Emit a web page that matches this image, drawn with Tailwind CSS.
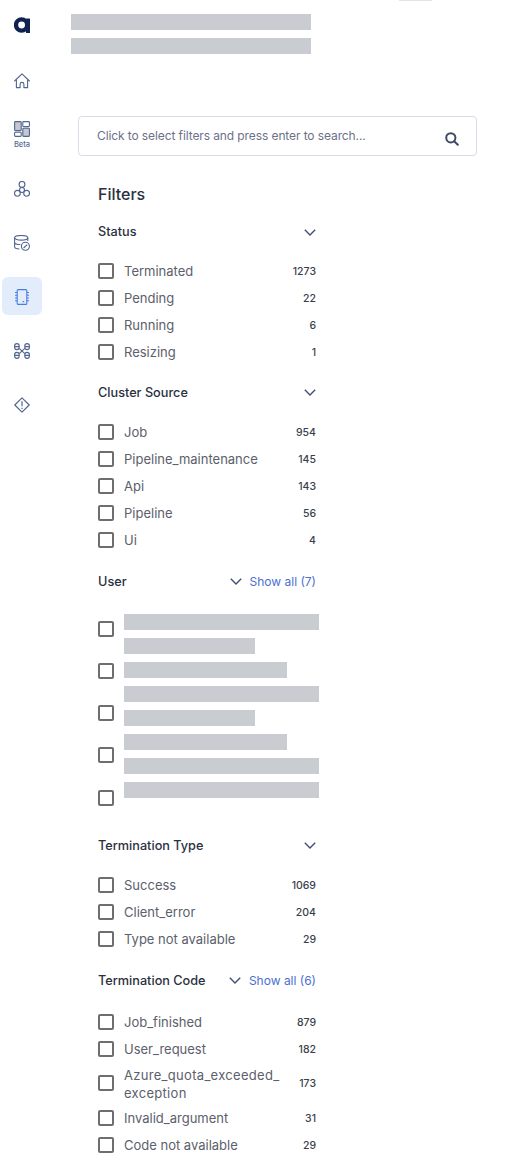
<!DOCTYPE html>
<html lang="en">
<head>
<meta charset="utf-8">
<title>Filters</title>
<script src="https://cdn.jsdelivr.net/npm/@tailwindcss/browser@4"></script>
</head>
<body class="bg-white">
<div class="relative flex w-[511px] h-[1168px] overflow-hidden bg-white font-['Inter','Noto_Sans',sans-serif]">
  <div class="absolute left-[399px] top-0 w-[33px] h-[1px] bg-[#e2e4e8]"></div>

  <!-- Sidebar -->
  <nav class="w-[44px] shrink-0 flex flex-col items-center">
    <svg class="mt-[17px] w-[16px] h-[16px]" viewBox="0 0 16 16"><circle cx="7.6" cy="8" r="5.6" fill="none" stroke="#0f2350" stroke-width="4.4"/><rect x="12" y="1.6" width="4" height="14.4" rx="0.5" fill="#0f2350"/></svg>
    <svg class="mt-[40px] w-[16px] h-[16px]" viewBox="0 0 16 16" fill="none" stroke="#52658f" stroke-width="1.1" stroke-linejoin="round" stroke-linecap="round"><path d="M0.6 8 8 0.8 15.4 8"/><path d="M2.4 7v7.6h3.7v-3.3a1.9 1.9 0 0 1 3.8 0v3.3h3.7V7"/></svg>
    <svg class="mt-[32px] w-[16px] h-[16px]" viewBox="0 0 16 16" fill="#c3c8d2" stroke="#52658f" stroke-width="1.1" stroke-linejoin="round"><rect x="0.6" y="0.6" width="6.6" height="9" rx="0.8"/><rect x="8.8" y="0.6" width="6.6" height="5" rx="0.8" fill="none"/><rect x="0.6" y="11.2" width="6.6" height="4.2" rx="0.8" fill="none"/><rect x="8.8" y="7.2" width="6.6" height="8.2" rx="0.8"/></svg>
    <span class="mt-[2px] h-[10px] text-[7.5px] leading-[12px] font-medium text-[#5a6c95]">Beta</span>
    <svg class="mt-[32px] w-[16px] h-[16px]" viewBox="0 0 16 16" fill="none" stroke="#52658f" stroke-width="1.1"><circle cx="8" cy="3.4" r="2.9"/><circle cx="3.4" cy="12.3" r="2.9"/><circle cx="12.6" cy="12.3" r="2.9"/><circle cx="8" cy="9" r="2.5"/></svg>
    <svg class="mt-[38px] w-[16px] h-[16px]" viewBox="0 0 16 16" fill="none" stroke="#52658f" stroke-width="1.1"><ellipse cx="7.2" cy="2.8" rx="6.6" ry="2.3"/><path d="M0.6 2.8v9c0 1.2 2.1 2.1 4.8 2.2M13.8 2.8v3.2M0.6 7.2c0 1.4 2.8 2.3 5.8 2.3"/><circle cx="11.4" cy="11.3" r="4"/><path d="M9.6 13 13.2 9.6"/></svg>
    <div class="mt-[26px] w-[40px] h-[38px] rounded-[6px] bg-[#e3ecfb] flex items-center justify-center">
      <svg class="mt-[2px] w-[14px] h-[16px]" viewBox="0 0 14 16" fill="none" stroke="#4a7de0" stroke-width="1.1"><rect x="2.2" y="0.6" width="9.6" height="14.8" rx="1"/><path d="M0 3.5h2.2M0 6.2h2.2M0 9h2.2M0 11.8h2.2M11.8 3.5h2.2M11.8 6.2h2.2M11.8 9h2.2M11.8 11.8h2.2M7.6 12.6h1.6"/></svg>
    </div>
    <svg class="mt-[28px] w-[16px] h-[16px]" viewBox="0 0 16 16" fill="none" stroke="#52658f" stroke-width="1.1"><rect x="0.6" y="0.6" width="4.6" height="6" rx="2.3"/><rect x="10.8" y="0.6" width="4.6" height="6" rx="2.3"/><rect x="0.6" y="9.4" width="4.6" height="6" rx="2.3"/><rect x="10.8" y="9.4" width="4.6" height="6" rx="2.3"/><path d="M0.6 3.6h4.6M10.8 3.6h4.6M0.6 12.4h4.6M10.8 12.4h4.6M5.2 5.4l5.6 5.2M10.8 5.4l-5.6 5.2"/></svg>
    <svg class="mt-[38px] w-[16px] h-[16px]" viewBox="0 0 16 16" fill="none" stroke="#52658f" stroke-width="1.2" stroke-linejoin="round"><path d="M8 0.8 15.2 8 8 15.2 0.8 8Z"/><path d="M8 4.2v5M8 10.8v1.2"/></svg>
  </nav>

  <!-- Main -->
  <main class="flex-1 min-w-0">
    <div class="ml-[27px] mt-[14px] flex flex-col gap-[8px]">
      <div class="w-[240px] h-[16px] bg-[#c9ccd0]"></div>
      <div class="w-[240px] h-[16px] bg-[#c9ccd0]"></div>
    </div>

    <div class="ml-[34px] mt-[62px] w-[399px] h-[40px] flex items-center justify-between pl-[18px] pr-[17px] border border-[#d9dce8] rounded-[4px]">
      <span class="text-[12px] tracking-[-0.1px] leading-[16px] text-[#6c7189] -mt-[1px]">Click to select filters and press enter to search...</span>
      <svg class="w-[14px] h-[14px] mt-[5px]" viewBox="0 0 14 14" fill="none" stroke="#3f4a63" stroke-width="2" stroke-linecap="round"><circle cx="5.8" cy="5.8" r="4.6"/><path d="M9.2 9.2 12.8 12.8"/></svg>
    </div>

    <div class="ml-[54px] w-[218px]">
      <h2 class="mt-[26px] h-[24px] text-[16px] leading-[24px] font-medium text-[#2b3040]">Filters</h2>

      <!-- Status -->
      <div class="mt-[14px] h-[24px] flex items-center justify-between text-[12.7px] font-medium text-[#2b3040]">
        <span>Status</span>
        <svg class="w-[12px] h-[7px]" viewBox="0 0 12 7" fill="none" stroke="#3f4f73" stroke-width="1.4"><path d="M0.8 0.8 6 6 11.2 0.8"/></svg>
      </div>
      <ul class="mt-[13.5px]">
        <li class="h-[27px] flex items-center"><input type="checkbox" class="appearance-none w-[16px] h-[16px] border-2 border-[#6e6e6e] rounded-[2px] shrink-0"><span class="ml-[10px] mt-[2px] flex-1 text-[13px] text-[#5b606b]">Terminated</span><span class="mt-[2px] text-[10.5px] font-medium text-[#3a3f4c]">1273</span></li>
        <li class="h-[27px] flex items-center"><input type="checkbox" class="appearance-none w-[16px] h-[16px] border-2 border-[#6e6e6e] rounded-[2px] shrink-0"><span class="ml-[10px] mt-[2px] flex-1 text-[13px] text-[#5b606b]">Pending</span><span class="mt-[2px] text-[10.5px] font-medium text-[#3a3f4c]">22</span></li>
        <li class="h-[27px] flex items-center"><input type="checkbox" class="appearance-none w-[16px] h-[16px] border-2 border-[#6e6e6e] rounded-[2px] shrink-0"><span class="ml-[10px] mt-[2px] flex-1 text-[13px] text-[#5b606b]">Running</span><span class="mt-[2px] text-[10.5px] font-medium text-[#3a3f4c]">6</span></li>
        <li class="h-[27px] flex items-center"><input type="checkbox" class="appearance-none w-[16px] h-[16px] border-2 border-[#6e6e6e] rounded-[2px] shrink-0"><span class="ml-[10px] mt-[2px] flex-1 text-[13px] text-[#5b606b]">Resizing</span><span class="mt-[2px] text-[10.5px] font-medium text-[#3a3f4c]">1</span></li>
      </ul>

      <!-- Cluster Source -->
      <div class="mt-[15.3px] h-[24px] flex items-center justify-between text-[12.7px] font-medium text-[#2b3040]">
        <span>Cluster Source</span>
        <svg class="w-[12px] h-[7px]" viewBox="0 0 12 7" fill="none" stroke="#3f4f73" stroke-width="1.4"><path d="M0.8 0.8 6 6 11.2 0.8"/></svg>
      </div>
      <ul class="mt-[13.7px]">
        <li class="h-[27px] flex items-center"><input type="checkbox" class="appearance-none w-[16px] h-[16px] border-2 border-[#6e6e6e] rounded-[2px] shrink-0"><span class="ml-[10px] mt-[2px] flex-1 text-[13px] text-[#5b606b]">Job</span><span class="mt-[2px] text-[10.5px] font-medium text-[#3a3f4c]">954</span></li>
        <li class="h-[27px] flex items-center"><input type="checkbox" class="appearance-none w-[16px] h-[16px] border-2 border-[#6e6e6e] rounded-[2px] shrink-0"><span class="ml-[10px] mt-[2px] flex-1 text-[13px] text-[#5b606b]">Pipeline_maintenance</span><span class="mt-[2px] text-[10.5px] font-medium text-[#3a3f4c]">145</span></li>
        <li class="h-[27px] flex items-center"><input type="checkbox" class="appearance-none w-[16px] h-[16px] border-2 border-[#6e6e6e] rounded-[2px] shrink-0"><span class="ml-[10px] mt-[2px] flex-1 text-[13px] text-[#5b606b]">Api</span><span class="mt-[2px] text-[10.5px] font-medium text-[#3a3f4c]">143</span></li>
        <li class="h-[27px] flex items-center"><input type="checkbox" class="appearance-none w-[16px] h-[16px] border-2 border-[#6e6e6e] rounded-[2px] shrink-0"><span class="ml-[10px] mt-[2px] flex-1 text-[13px] text-[#5b606b]">Pipeline</span><span class="mt-[2px] text-[10.5px] font-medium text-[#3a3f4c]">56</span></li>
        <li class="h-[27px] flex items-center"><input type="checkbox" class="appearance-none w-[16px] h-[16px] border-2 border-[#6e6e6e] rounded-[2px] shrink-0"><span class="ml-[10px] mt-[2px] flex-1 text-[13px] text-[#5b606b]">Ui</span><span class="mt-[2px] text-[10.5px] font-medium text-[#3a3f4c]">4</span></li>
      </ul>

      <!-- User -->
      <div class="mt-[16.3px] h-[24px] flex items-center text-[12.7px] font-medium text-[#2b3040]">
        <span class="flex-1">User</span>
        <svg class="w-[12px] h-[7px] mr-[8px]" viewBox="0 0 12 7" fill="none" stroke="#3f4f73" stroke-width="1.4"><path d="M0.8 0.8 6 6 11.2 0.8"/></svg>
        <span class="mt-[1px] text-[12px] font-normal text-[#4a6fd1]">Show all (7)</span>
      </div>
      <div class="mt-[20px] flex h-[184px]">
        <div class="w-[16px] shrink-0 pt-[7px] flex flex-col gap-[26.2px]">
          <input type="checkbox" class="appearance-none block shrink-0 w-[16px] h-[16px] border-2 border-[#6e6e6e] rounded-[2px]">
          <input type="checkbox" class="appearance-none block shrink-0 w-[16px] h-[16px] border-2 border-[#6e6e6e] rounded-[2px]">
          <input type="checkbox" class="appearance-none block shrink-0 w-[16px] h-[16px] border-2 border-[#6e6e6e] rounded-[2px]">
          <input type="checkbox" class="appearance-none block shrink-0 w-[16px] h-[16px] border-2 border-[#6e6e6e] rounded-[2px]">
          <input type="checkbox" class="appearance-none block shrink-0 w-[16px] h-[16px] border-2 border-[#6e6e6e] rounded-[2px]">
        </div>
        <div class="ml-[10px] flex flex-col gap-[8px]">
          <div class="w-[195px] h-[16px] bg-[#c9ccd0]"></div>
          <div class="w-[131px] h-[16px] bg-[#c9ccd0]"></div>
          <div class="w-[163px] h-[16px] bg-[#c9ccd0]"></div>
          <div class="w-[195px] h-[16px] bg-[#c9ccd0]"></div>
          <div class="w-[131px] h-[16px] bg-[#c9ccd0]"></div>
          <div class="w-[163px] h-[16px] bg-[#c9ccd0]"></div>
          <div class="w-[195px] h-[16px] bg-[#c9ccd0]"></div>
          <div class="w-[195px] h-[16px] bg-[#c9ccd0]"></div>
        </div>
      </div>

      <!-- Termination Type -->
      <div class="mt-[36px] h-[24px] flex items-center justify-between text-[12.7px] font-medium text-[#2b3040]">
        <span>Termination Type</span>
        <svg class="w-[12px] h-[7px]" viewBox="0 0 12 7" fill="none" stroke="#3f4f73" stroke-width="1.4"><path d="M0.8 0.8 6 6 11.2 0.8"/></svg>
      </div>
      <ul class="mt-[13.2px]">
        <li class="h-[27.25px] flex items-center"><input type="checkbox" class="appearance-none w-[16px] h-[16px] border-2 border-[#6e6e6e] rounded-[2px] shrink-0"><span class="ml-[10px] mt-[2px] flex-1 text-[13px] text-[#5b606b]">Success</span><span class="mt-[2px] text-[10.5px] font-medium text-[#3a3f4c]">1069</span></li>
        <li class="h-[27.25px] flex items-center"><input type="checkbox" class="appearance-none w-[16px] h-[16px] border-2 border-[#6e6e6e] rounded-[2px] shrink-0"><span class="ml-[10px] mt-[2px] flex-1 text-[13px] text-[#5b606b]">Client_error</span><span class="mt-[2px] text-[10.5px] font-medium text-[#3a3f4c]">204</span></li>
        <li class="h-[27.25px] flex items-center"><input type="checkbox" class="appearance-none w-[16px] h-[16px] border-2 border-[#6e6e6e] rounded-[2px] shrink-0"><span class="ml-[10px] mt-[2px] flex-1 text-[13px] text-[#5b606b]">Type not available</span><span class="mt-[2px] text-[10.5px] font-medium text-[#3a3f4c]">29</span></li>
      </ul>

      <!-- Termination Code -->
      <div class="mt-[16px] h-[24px] flex items-center text-[12.7px] font-medium text-[#2b3040]">
        <span class="flex-1">Termination Code</span>
        <svg class="w-[12px] h-[7px] mr-[8px]" viewBox="0 0 12 7" fill="none" stroke="#3f4f73" stroke-width="1.4"><path d="M0.8 0.8 6 6 11.2 0.8"/></svg>
        <span class="mt-[1px] text-[12px] font-normal text-[#4a6fd1]">Show all (6)</span>
      </div>
      <ul class="mt-[15.2px]">
        <li class="h-[27.25px] flex items-center"><input type="checkbox" class="appearance-none w-[16px] h-[16px] border-2 border-[#6e6e6e] rounded-[2px] shrink-0"><span class="ml-[10px] mt-[2px] flex-1 text-[13px] text-[#5b606b]">Job_finished</span><span class="mt-[2px] text-[10.5px] font-medium text-[#3a3f4c]">879</span></li>
        <li class="h-[27.25px] flex items-center"><input type="checkbox" class="appearance-none w-[16px] h-[16px] border-2 border-[#6e6e6e] rounded-[2px] shrink-0"><span class="ml-[10px] mt-[2px] flex-1 text-[13px] text-[#5b606b]">User_request</span><span class="mt-[2px] text-[10.5px] font-medium text-[#3a3f4c]">182</span></li>
        <li class="h-[41.5px] flex items-center"><input type="checkbox" class="appearance-none w-[16px] h-[16px] border-2 border-[#6e6e6e] rounded-[2px] shrink-0"><span class="ml-[10px] mt-[2px] flex-1 text-[13px] tracking-[0.3px] leading-[18px] text-[#5b606b]">Azure_quota_exceeded_<br>exception</span><span class="mt-[2px] text-[10.5px] font-medium text-[#3a3f4c]">173</span></li>
        <li class="h-[27.25px] flex items-center"><input type="checkbox" class="appearance-none w-[16px] h-[16px] border-2 border-[#6e6e6e] rounded-[2px] shrink-0"><span class="ml-[10px] mt-[2px] flex-1 text-[13px] text-[#5b606b]">Invalid_argument</span><span class="mt-[2px] text-[10.5px] font-medium text-[#3a3f4c]">31</span></li>
        <li class="h-[27.25px] flex items-center"><input type="checkbox" class="appearance-none w-[16px] h-[16px] border-2 border-[#6e6e6e] rounded-[2px] shrink-0"><span class="ml-[10px] mt-[2px] flex-1 text-[13px] text-[#5b606b]">Code not available</span><span class="mt-[2px] text-[10.5px] font-medium text-[#3a3f4c]">29</span></li>
      </ul>
    </div>
  </main>
</div>
</body>
</html>
